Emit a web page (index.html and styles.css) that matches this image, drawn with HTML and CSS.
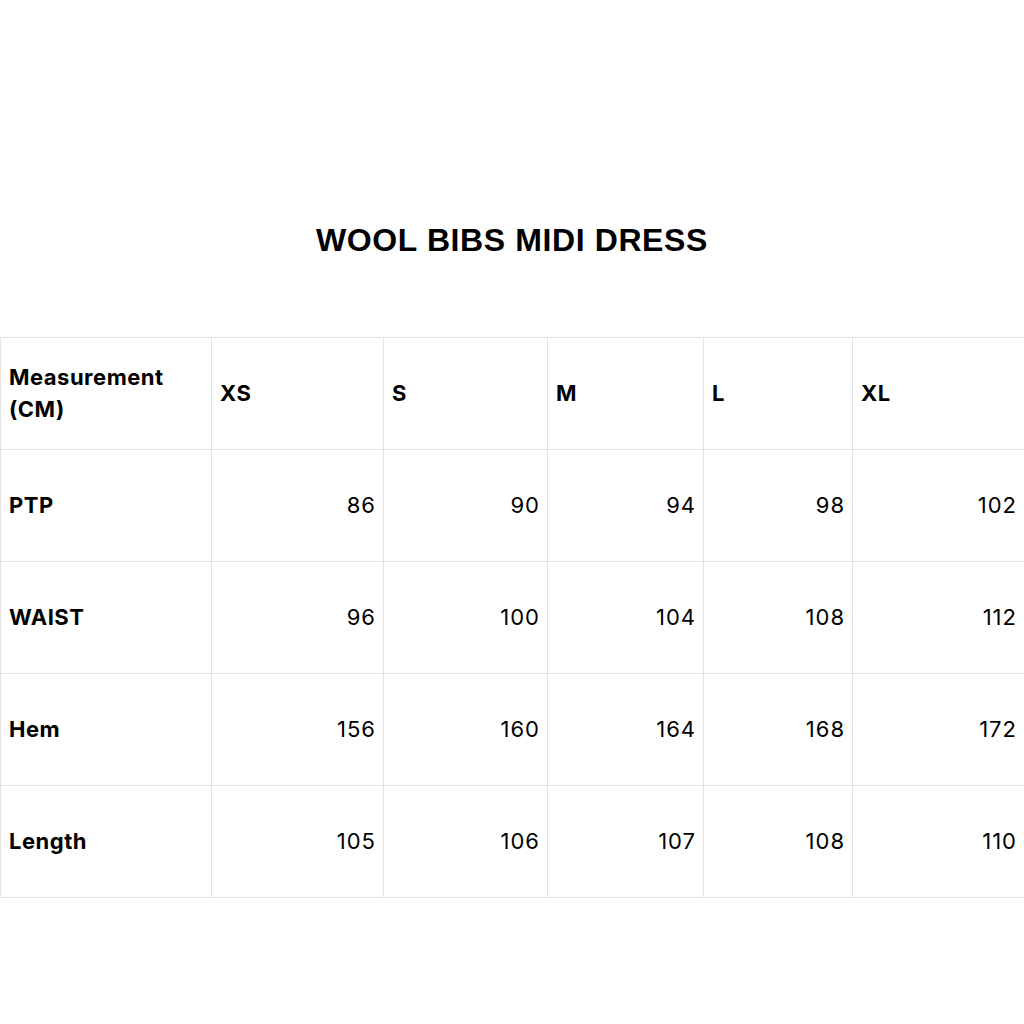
FILE: index.html
```html
<!DOCTYPE html>
<html>
<head>
<meta charset="utf-8">
<link rel="stylesheet" href="styles.css">
</head>
<body>
<div class="page">
  <h1 class="title">WOOL BIBS MIDI DRESS</h1>
  <table class="sizes">
    <colgroup>
      <col class="c0"><col class="c1"><col class="c2"><col class="c3"><col class="c4"><col class="c5">
    </colgroup>
    <tr class="head">
      <th>Measurement (CM)</th><th>XS</th><th>S</th><th>M</th><th>L</th><th>XL</th>
    </tr>
    <tr><th>PTP</th><td>86</td><td>90</td><td>94</td><td>98</td><td>102</td></tr>
    <tr><th>WAIST</th><td>96</td><td>100</td><td>104</td><td>108</td><td>112</td></tr>
    <tr><th>Hem</th><td>156</td><td>160</td><td>164</td><td>168</td><td>172</td></tr>
    <tr><th>Length</th><td>105</td><td>106</td><td>107</td><td>108</td><td>110</td></tr>
  </table>
</div>
</body>
</html>
```
FILE: styles.css
```css
html, body { margin: 0; padding: 0; background: #fff; }
.page { width: 1024px; height: 1024px; padding-top: 222px; box-sizing: border-box; }
.title {
  margin: 0 0 79px 0;
  text-align: center;
  font-family: "Liberation Sans", Arial, sans-serif;
  font-weight: 700;
  font-size: 32px;
  line-height: 36px;
  color: #000;
  letter-spacing: 0.6px;
}
.sizes {
  border-collapse: collapse;
  table-layout: fixed;
  width: 1024px;
  margin-left: 0;
}
.c0 { width: 211px; } .c1 { width: 172px; } .c2 { width: 164px; }
.c3 { width: 156px; } .c4 { width: 149px; } .c5 { width: 172px; }
.sizes th, .sizes td {
  border: 1.5px solid #e3e3e3;
  height: 112px;
  box-sizing: border-box;
  padding: 0 7px 2px 8px;
  vertical-align: middle;
  font-family: Inter, "Liberation Sans", sans-serif;
  font-size: 22px;
  line-height: 32px;
  color: #000;
}
.sizes th {
  text-align: left;
  font-weight: 700;
  letter-spacing: 0.5px;
}
.sizes td {
  text-align: right;
  font-weight: 400;
  letter-spacing: 1px;
}
```
